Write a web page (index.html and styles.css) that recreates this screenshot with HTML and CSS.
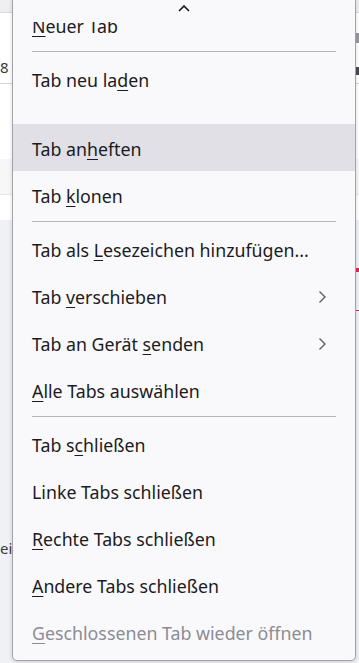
FILE: index.html
```html
<!DOCTYPE html>
<html lang="de">
<head>
  <meta charset="UTF-8">
  <meta name="viewport" content="width=device-width, initial-scale=1.0">
  <title>Tab-Kontextmenü</title>
  <link rel="stylesheet" href="styles.css">
</head>
<body>
  <!-- Page behind the menu -->
  <div class="page">
    <div class="toolbar"></div>
    <div class="tabstrip">
      <span class="tab-label">8 a</span>
      <span class="tab-bits">
        <span class="bit grey"></span>
        <span class="bit dark"></span>
      </span>
    </div>
    <div class="blank"></div>
    <div class="band"></div>
    <div class="blank short"></div>
    <div class="content">
      <span class="mark red top"></span>
      <span class="mark red line"></span>
      <span class="side-text">ei</span>
    </div>
  </div>

  <!-- Context menu -->
  <div class="menu">
    <div class="scroll-up">
      <svg width="12" height="7" viewBox="0 0 12 7"><path d="M1 6 L6 1 L11 6" fill="none" stroke="#15141a" stroke-width="1.6"/></svg>
    </div>

    <ul class="menu-list">
      <li class="item"><span><u>N</u>euer Tab</span></li>
      <li class="separator"></li>
      <li class="item"><span>Tab neu la<u>d</u>en</span></li>
      <li class="gap"></li>
      <li class="item hover"><span>Tab an<u>h</u>eften</span></li>
      <li class="item"><span>Tab <u>k</u>lonen</span></li>
      <li class="separator"></li>
      <li class="item"><span>Tab als <u>L</u>esezeichen hinzufügen...</span></li>
      <li class="item submenu">
        <span>Tab <u>v</u>erschieben</span>
        <svg class="arrow" width="9" height="14" viewBox="0 0 9 14"><path d="M1.5 1.5 L7 7 L1.5 12.5" fill="none" stroke="#5b5b66" stroke-width="1.4"/></svg>
      </li>
      <li class="item submenu">
        <span>Tab an Gerät <u>s</u>enden</span>
        <svg class="arrow" width="9" height="14" viewBox="0 0 9 14"><path d="M1.5 1.5 L7 7 L1.5 12.5" fill="none" stroke="#5b5b66" stroke-width="1.4"/></svg>
      </li>
      <li class="item"><span><u>A</u>lle Tabs auswählen</span></li>
      <li class="separator"></li>
      <li class="item"><span>Tab s<u>c</u>hließen</span></li>
      <li class="item"><span>Linke Tabs schließen</span></li>
      <li class="item"><span><u>R</u>echte Tabs schließen</span></li>
      <li class="item"><span><u>A</u>ndere Tabs schließen</span></li>
      <li class="item disabled"><span><u>G</u>eschlossenen Tab wieder öffnen</span></li>
    </ul>
  </div>
</body>
</html>
```

FILE: styles.css
```css
body {
  margin: 0;
  width: 359px;
  height: 663px;
  overflow: hidden;
  position: relative;
  background-color: #ffffff;
  font-family: "Noto Sans", Arial, sans-serif;
}

/* Page behind */
.page {
  display: flex;
  flex-direction: column;
  height: 663px;
}

.toolbar {
  height: 12px;
  background-color: #efeff2;
  border-bottom: 1px solid #d9d9de;
}

.tabstrip {
  height: 71px;
  border-bottom: 1px solid #d4d4d8;
  display: flex;
  align-items: flex-end;
  justify-content: space-between;
  padding-bottom: 6px;
  box-sizing: border-box;
}

.tab-label {
  font-size: 15px;
  color: #3a3a40;
}

.tab-bits {
  display: flex;
  flex-direction: column;
  align-items: flex-end;
  gap: 24px;
  padding-bottom: 2px;
}

.bit {
  width: 3px;
}

.bit.grey {
  height: 10px;
  background-color: #9a9aa0;
}

.bit.dark {
  height: 8px;
  background-color: #4a4a50;
}

.blank {
  height: 75px;
}

.blank.short {
  height: 25px;
  border-top: 1px solid #e8e8ea;
}

.band {
  height: 35px;
  background-color: #f7f7f8;
}

.content {
  flex: 1;
  background-color: #f0f1f5;
  position: relative;
}

.mark {
  position: absolute;
  right: 0;
  width: 3px;
}

.mark.top {
  top: 48px;
  height: 4px;
  background-color: #e22850;
}

.mark.line {
  top: 90px;
  height: 1px;
  background-color: #e22850;
}

.side-text {
  position: absolute;
  left: 0;
  top: 318px;
  font-size: 15px;
  color: #3a3a40;
}

/* Menu */
.menu {
  position: absolute;
  left: 12px;
  top: -4px;
  width: 344px;
  height: 665px;
  box-sizing: border-box;
  background-color: #f9f9fb;
  border: 1px solid #a3a3a8;
  border-radius: 5px;
  box-shadow: 0 1px 4px rgba(0, 0, 0, 0.15);
  overflow: hidden;
}

.scroll-up {
  position: absolute;
  top: 0;
  left: 0;
  right: 0;
  height: 25px;
  background-color: #f9f9fb;
  display: flex;
  justify-content: center;
  align-items: flex-end;
  padding-bottom: 10px;
  box-sizing: border-box;
  z-index: 1;
}

.menu-list {
  list-style: none;
  margin: 0;
  padding: 4px 0 0;
}

.item {
  height: 47px;
  display: flex;
  align-items: center;
  justify-content: space-between;
  padding: 2px 28px 0 19px;
  box-sizing: border-box;
  font-size: 17.8px;
  color: #1c1b22;
  white-space: nowrap;
}

.item u {
  text-underline-offset: 3px;
  text-decoration-thickness: 1px;
}

.item.hover {
  background-color: #e0e0e6;
}

.item.disabled {
  color: #8c8c94;
}

.separator {
  height: 1px;
  margin: 3px 19px;
  background-color: #b4b4ba;
}

.gap {
  height: 22px;
}

.arrow {
  flex-shrink: 0;
}
```
